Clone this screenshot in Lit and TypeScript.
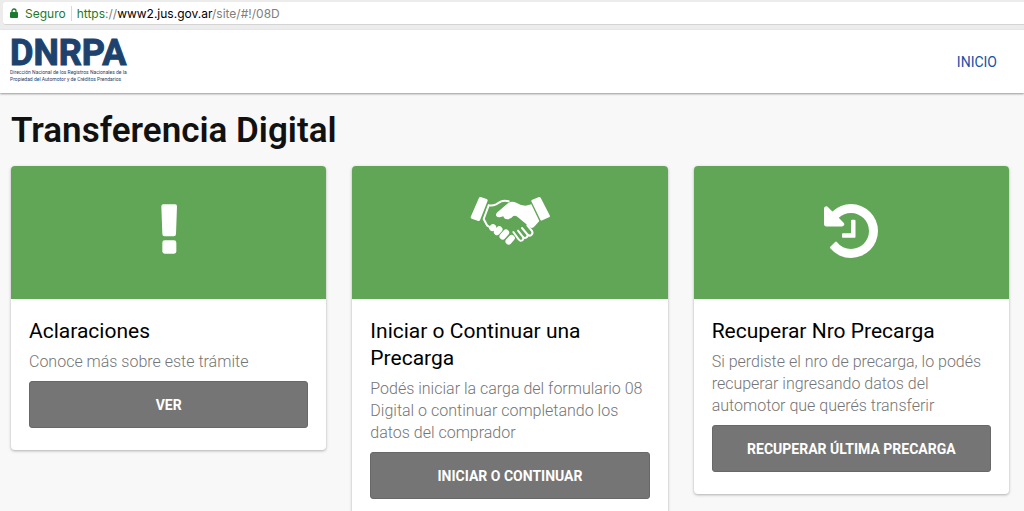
import { LitElement, html, css, svg } from "lit";
import { customElement, property } from "lit/decorators.js";

const icons = {
  exclamation: svg`
    <svg class="mark" viewBox="0 0 48 150" aria-hidden="true">
      <path d="M7 1h35q6 0 6 6l-3 83q0 7-7 7H11q-7 0-7-7L1 7q0-6 6-6z" />
      <rect x="4" y="109" width="42" height="40" rx="7" />
    </svg>`,
  handshake: svg`
    <svg class="hands" viewBox="6 9 240 150" aria-hidden="true">
      <path d="M38 12l18 6q4 2 3 5L36 82q-2 3-5 2l-20-7q-4-2-3-5L33 14q1-3 5-2z" />
      <path d="M213 12l-20 8q-4 2-3 5l27 55q2 4 6 2l20-9q4-2 2-6L218 14q-2-3-5-2z" />
      <path class="line" d="M62 37q12 2 22-3l14-8q10-5 24-1M62 37L47 78l10 19 12 8" />
      <path d="M190 34l24 50-14 16q-7 8-14 3l-38-32q-6-5-12-2-8 10-18 10-10 0-12-9l-8 2q-9 3-13-3-3-6 3-11l30-26q12-10 27-3 14 9 28 9z" />
      <path class="line" d="M136 117l16 22q5 8 12 2 4-4 0-10l-14-18M164 131q6 7 12 2 5-4 1-10l-15-18M177 123q7 8 13 3 6-5 2-12l-14-17" />
      <path class="fingers" d="M73 105l2-2M87 117l7-8M104 130l10-11M122 145l9-10" />
    </svg>`,
  history: svg`
    <svg class="clock" viewBox="0 128 1536 1536" aria-hidden="true">
      <path d="M1536 896q0 156-61 298t-164 245-245 164-298 61q-172 0-327-72.500t-264-204.500q-7-10-6.500-22.500t8.500-20.500l137-138q10-9 25-9 16 2 23 12 73 95 179 147t225 52q104 0 198.500-40.500t163.500-109.500 109.500-163.500 40.500-198.500-40.500-198.500-109.500-163.500-163.500-109.500-198.500-40.500q-98 0-188 35.500t-160 101.500l137 138q31 30 14 69-17 40-59 40h-448q-26 0-45-19t-19-45v-448q0-42 40-59 39-17 69 14l130 129q107-101 244.500-156.500t284.500-55.500q156 0 298 61t245 164 164 245 61 298zm-640-288v448q0 14-9 23t-23 9h-320q-14 0-23-9t-9-23v-64q0-14 9-23t23-9h224v-352q0-14 9-23t23-9h64q14 0 23 9t9 23z" />
    </svg>`,
};

type IconName = keyof typeof icons;

@customElement("task-card")
export class TaskCard extends LitElement {
  @property() icon: IconName = "exclamation";
  @property() heading = "";
  @property() text = "";
  @property() action = "";

  static styles = css`
    :host {
      display: block;
      background: #fff;
      border-radius: 4px;
      overflow: hidden;
      box-shadow: 0 1px 3px rgba(0, 0, 0, 0.3);
    }
    .banner {
      height: 133px;
      display: flex;
      justify-content: center;
      box-sizing: border-box;
      padding-top: 30px;
      background: #61a656;
    }
    svg {
      fill: #fff;
      display: block;
    }
    .mark {
      width: 16px;
      height: 50px;
      margin-top: 8px;
    }
    .hands {
      width: 80px;
      height: 50px;
    }
    .clock {
      width: 54px;
      height: 54px;
      margin-top: 8px;
    }
    .line {
      fill: none;
      stroke: #fff;
      stroke-width: 6;
      stroke-linecap: round;
      stroke-linejoin: round;
    }
    .fingers {
      fill: none;
      stroke: #fff;
      stroke-width: 19;
      stroke-linecap: round;
    }
    .body {
      padding: 19px 18px 22px;
    }
    h2 {
      margin: 0;
      font-size: 21px;
      line-height: 27px;
      font-weight: 400;
      color: #000;
    }
    p {
      margin: 6px 0 8px;
      font-size: 16px;
      line-height: 22px;
      font-weight: 300;
      color: #757575;
    }
    button {
      display: block;
      width: 100%;
      height: 47px;
      border: 1px solid #686868;
      border-radius: 3px;
      background: #757575;
      color: #fff;
      font: 700 14px Roboto, sans-serif;
      cursor: pointer;
    }
  `;

  render() {
    return html`
      <div class="banner">${icons[this.icon]}</div>
      <div class="body">
        <h2>${this.heading}</h2>
        <p>${this.text}</p>
        <button type="button">${this.action}</button>
      </div>
    `;
  }
}

const cards: { icon: IconName; heading: string; text: string; action: string }[] = [
  {
    icon: "exclamation",
    heading: "Aclaraciones",
    text: "Conoce más sobre este trámite",
    action: "VER",
  },
  {
    icon: "handshake",
    heading: "Iniciar o Continuar una Precarga",
    text: "Podés iniciar la carga del formulario 08 Digital o continuar completando los datos del comprador",
    action: "INICIAR O CONTINUAR",
  },
  {
    icon: "history",
    heading: "Recuperar Nro Precarga",
    text: "Si perdiste el nro de precarga, lo podés recuperar ingresando datos del automotor que querés transferir",
    action: "RECUPERAR ÚLTIMA PRECARGA",
  },
];

@customElement("app-root")
export class AppRoot extends LitElement {
  static styles = css`
    :host {
      display: block;
      height: 100vh;
      overflow: hidden;
      background: #f8f8f8;
      font-family: Roboto, sans-serif;
    }
    .browser {
      padding: 2px 0 5px 3px;
      background: #ececec;
    }
    .address {
      display: flex;
      align-items: center;
      height: 23px;
      box-sizing: border-box;
      padding-left: 7px;
      background: #fff;
      border-bottom: 1px solid #d4d4d4;
      border-radius: 3px 0 0 3px;
      font: 12px Inter, sans-serif;
      color: #808080;
    }
    .address svg {
      width: 8px;
      height: 10px;
      margin-right: 7px;
    }
    .secure {
      color: #1b7a2c;
      padding-right: 5px;
      margin-right: 5px;
      border-right: 1px solid #d8d8d8;
    }
    .scheme {
      color: #1b7a2c;
    }
    .domain {
      color: #000;
    }
    header {
      display: flex;
      align-items: center;
      justify-content: space-between;
      height: 63px;
      box-sizing: border-box;
      padding: 0 27px 0 10px;
      background: #fff;
      box-shadow: 0 1px 2px rgba(0, 0, 0, 0.4);
    }
    .logo {
      color: #1c426d;
      text-decoration: none;
      display: block;
    }
    .name {
      display: block;
      font: 700 36px/32px Roboto, sans-serif;
      -webkit-text-stroke: 1px #1c426d;
    }
    .tag {
      display: block;
      padding-bottom: 4px;
      font: 5px/7px Roboto, sans-serif;
    }
    nav a {
      font-size: 14px;
      color: #1453a8;
      text-decoration: none;
    }
    main {
      padding: 17px 15px 24px 11px;
    }
    h1 {
      margin: 0 0 14px;
      font-size: 35px;
      line-height: 42px;
      font-weight: 600;
      color: #111;
    }
    .grid {
      display: grid;
      grid-template-columns: repeat(3, 1fr);
      gap: 26px;
      align-items: start;
    }
  `;

  render() {
    return html`
      <div class="browser">
        <div class="address">
          <svg viewBox="0 0 8 10" aria-hidden="true">
            <rect y="4" width="8" height="6" rx="1" fill="#1b7a2c" />
            <path d="M2 5V3a2 2 0 0 1 4 0v2" fill="none" stroke="#1b7a2c" stroke-width="1.300" />
          </svg>
          <span class="secure">Seguro</span>
          <span><span class="scheme">https</span>://<span class="domain">www2.jus.gov.ar</span>/site/#!/08D</span>
        </div>
      </div>
      <header>
        <a class="logo" href="#">
          <span class="name">DNRPA</span>
          <span class="tag">Dirección Nacional de los Registros Nacionales de la<br />Propiedad del Automotor y de Créditos Prendarios</span>
        </a>
        <nav><a href="#">INICIO</a></nav>
      </header>
      <main>
        <h1>Transferencia Digital</h1>
        <div class="grid">
          ${cards.map(
            (c) => html`<task-card
              .icon=${c.icon}
              .heading=${c.heading}
              .text=${c.text}
              .action=${c.action}
            ></task-card>`
          )}
        </div>
      </main>
    `;
  }
}
